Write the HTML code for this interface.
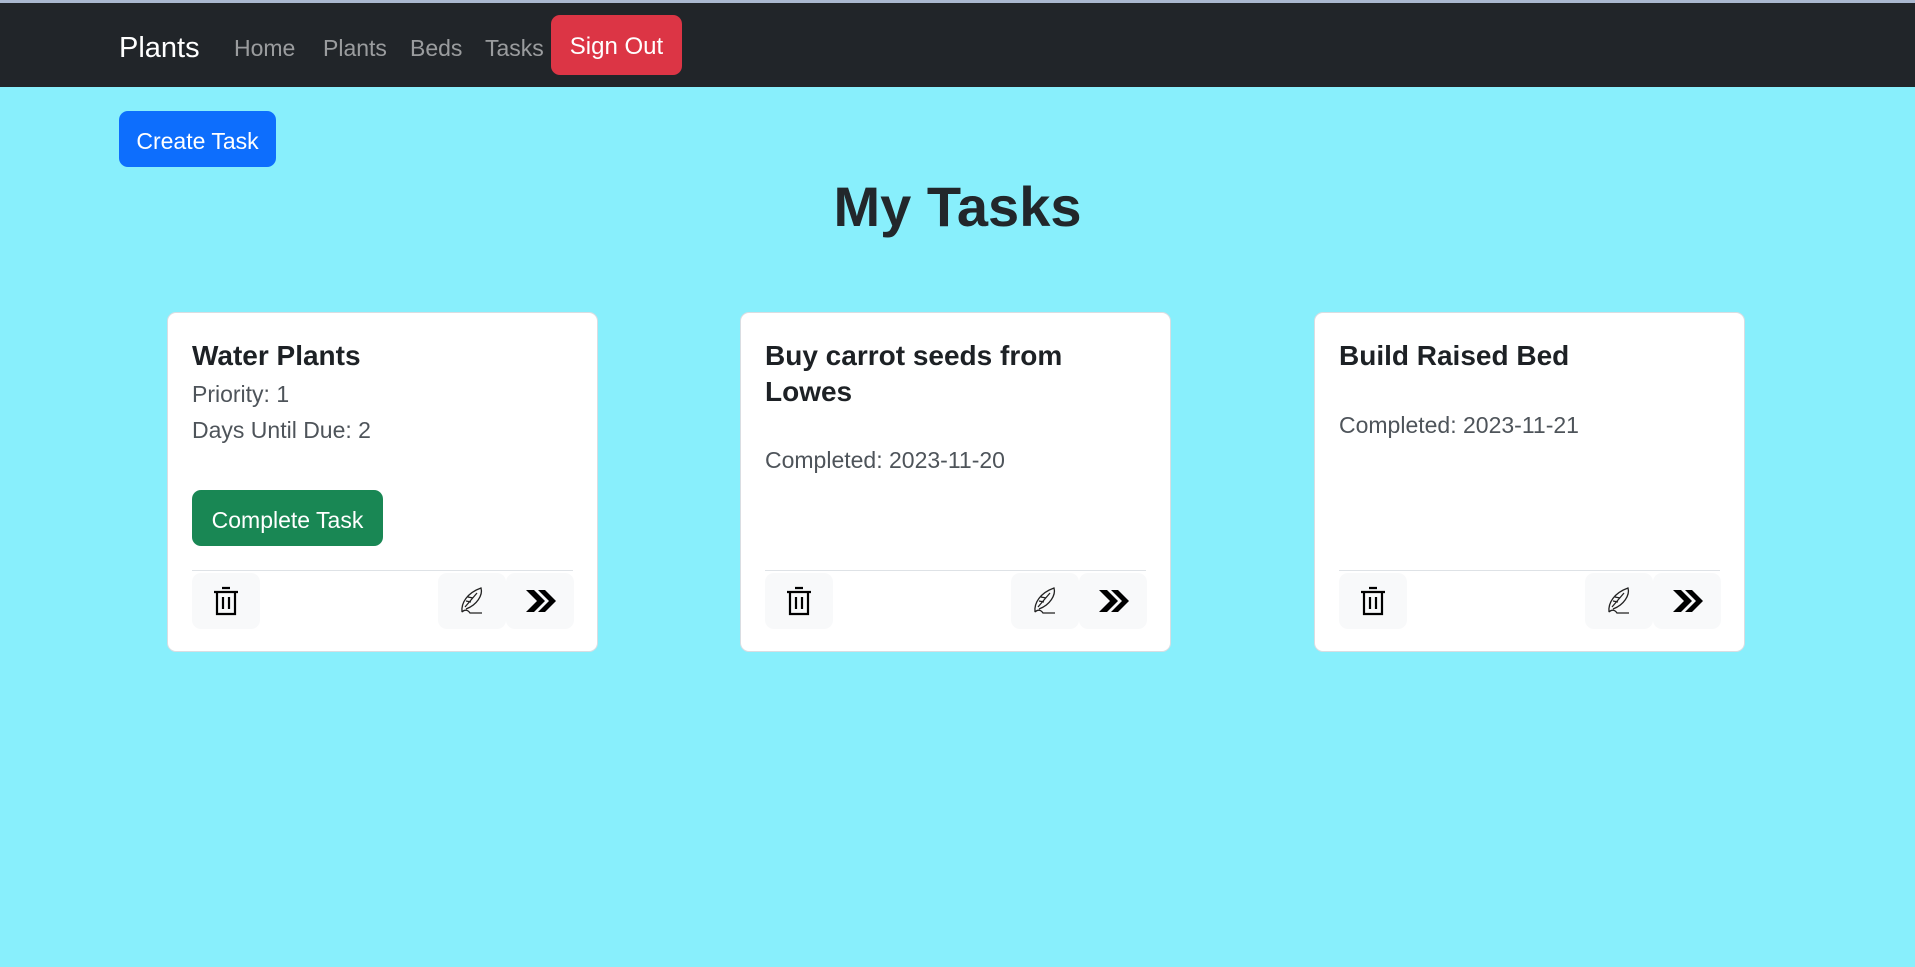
<!DOCTYPE html>
<html><head><meta charset="utf-8"><style>
*{box-sizing:border-box;margin:0;padding:0}
body{width:1915px;height:967px;background:#88effc;font-family:"Liberation Sans",sans-serif;position:relative;overflow:hidden;color:#212529}
.topline{position:absolute;left:0;top:0;width:1915px;height:3px;background:#aab8cf}
.nav{position:absolute;left:0;top:3px;width:1915px;height:84px;background:#212529}
.a{position:absolute;font-size:23px;line-height:36px;color:rgba(255,255,255,.55)}
.brand{position:absolute;left:119px;top:27px;font-size:29px;line-height:36px;color:#fff}
.so{position:absolute;left:551px;top:12px;width:131px;height:60px;background:#dc3545;border-radius:9px;color:#fff;font-size:24px;line-height:64px;text-align:center}
.ct{position:absolute;left:119px;top:111px;width:157px;height:56px;background:#0d6efd;border-radius:9px;color:#fff;font-size:23px;line-height:60px;text-align:center}
h1{position:absolute;left:0;width:1915px;top:172px;text-align:center;font-size:56px;line-height:70px;font-weight:bold;color:#22272b}
.card{position:absolute;top:312px;width:431px;height:340px;background:#fff;border:1px solid #d9dde2;border-radius:9px}
.t{position:absolute;left:24px;top:25px;width:380px;font-size:28px;line-height:36px;font-weight:bold;color:#1d2125}
.p{position:absolute;left:24px;font-size:23px;line-height:36px;color:#4e545a}
.cb{position:absolute;left:24px;top:177px;width:191px;height:56px;background:#198754;border-radius:9px;color:#fff;font-size:23px;line-height:60px;text-align:center}
.hr{position:absolute;left:24px;right:24px;top:257px;height:1px;background:#dee2e6}
.fb{position:absolute;top:260px;width:68px;height:56px;background:#f8f9fa;border-radius:9px;display:flex;align-items:center;justify-content:center}
</style></head><body>
<div class="topline"></div>
<div class="nav">
<div class="brand">Plants</div>
<div class="a" style="left:234px;top:27px">Home</div>
<div class="a" style="left:323px;top:27px">Plants</div>
<div class="a" style="left:410px;top:27px">Beds</div>
<div class="a" style="left:485px;top:27px">Tasks</div>
<div class="so">Sign Out</div>
</div>
<div class="ct">Create Task</div>
<h1>My Tasks</h1>

<div class="card" style="left:167px">
<div class="t">Water Plants</div>
<div class="p" style="top:63px">Priority: 1</div>
<div class="p" style="top:99px">Days Until Due: 2</div>
<div class="cb">Complete Task</div>
<div class="hr"></div>
<div class="fb" style="left:24px"><svg width="28" height="30" viewBox="0 0 28 30" fill="none" stroke="#000" stroke-width="2.2"><path d="M10 2h8M2 6h24M5 6v22h18V6M11 11v12M17 11v12"/></svg></div>
<div class="fb" style="left:270px"><svg width="30" height="32" viewBox="0 0 30 32" fill="none" stroke="#222" stroke-width="1.3"><path d="M5 27C4 18 10 8 24 3C26 10 20 20 9 24M8 22L20 8M9 16l5 1M11 12l5 1M5 27c3-3 6-2 8 1h12"/></svg></div>
<div class="fb" style="left:338px"><svg width="32" height="26" viewBox="0 0 32 26"><path d="M2 2h8l11 11-11 11H2l11-11zM14 2h7l11 11-11 11h-7l11-11z" fill="#000"/></svg></div>
</div>

<div class="card" style="left:740px">
<div class="t">Buy carrot seeds from<br>Lowes</div>
<div class="p" style="top:129px">Completed: 2023-11-20</div>
<div class="hr"></div>
<div class="fb" style="left:24px"><svg width="28" height="30" viewBox="0 0 28 30" fill="none" stroke="#000" stroke-width="2.2"><path d="M10 2h8M2 6h24M5 6v22h18V6M11 11v12M17 11v12"/></svg></div>
<div class="fb" style="left:270px"><svg width="30" height="32" viewBox="0 0 30 32" fill="none" stroke="#222" stroke-width="1.3"><path d="M5 27C4 18 10 8 24 3C26 10 20 20 9 24M8 22L20 8M9 16l5 1M11 12l5 1M5 27c3-3 6-2 8 1h12"/></svg></div>
<div class="fb" style="left:338px"><svg width="32" height="26" viewBox="0 0 32 26"><path d="M2 2h8l11 11-11 11H2l11-11zM14 2h7l11 11-11 11h-7l11-11z" fill="#000"/></svg></div>
</div>

<div class="card" style="left:1314px">
<div class="t">Build Raised Bed</div>
<div class="p" style="top:94px">Completed: 2023-11-21</div>
<div class="hr"></div>
<div class="fb" style="left:24px"><svg width="28" height="30" viewBox="0 0 28 30" fill="none" stroke="#000" stroke-width="2.2"><path d="M10 2h8M2 6h24M5 6v22h18V6M11 11v12M17 11v12"/></svg></div>
<div class="fb" style="left:270px"><svg width="30" height="32" viewBox="0 0 30 32" fill="none" stroke="#222" stroke-width="1.3"><path d="M5 27C4 18 10 8 24 3C26 10 20 20 9 24M8 22L20 8M9 16l5 1M11 12l5 1M5 27c3-3 6-2 8 1h12"/></svg></div>
<div class="fb" style="left:338px"><svg width="32" height="26" viewBox="0 0 32 26"><path d="M2 2h8l11 11-11 11H2l11-11zM14 2h7l11 11-11 11h-7l11-11z" fill="#000"/></svg></div>
</div>
</body></html>
